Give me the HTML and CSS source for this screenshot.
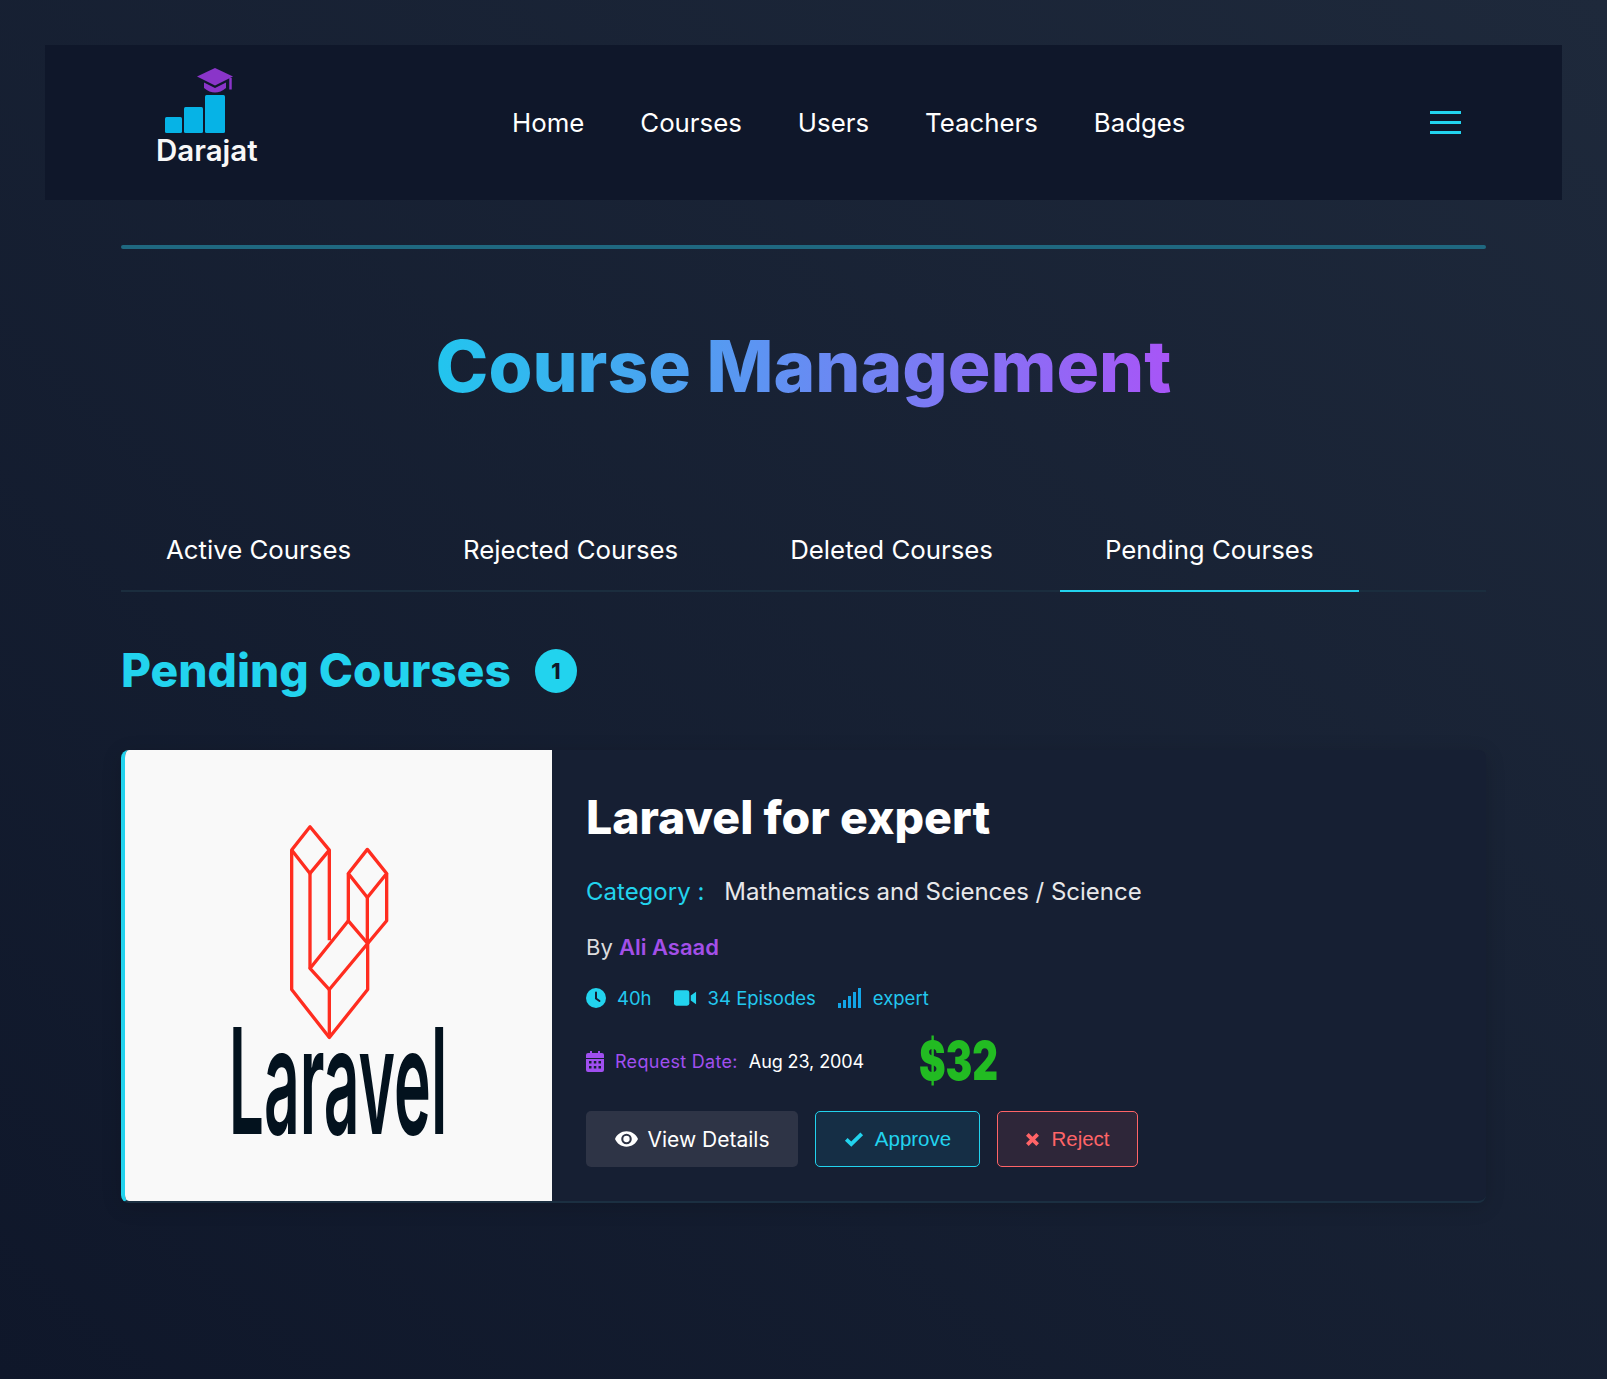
FILE: index.html
```html
<!DOCTYPE html>
<html lang="en">
<head>
<meta charset="utf-8">
<title>Course Management</title>
<link rel="stylesheet" href="styles.css">
</head>
<body>
<header class="nav">
  <a class="logo" href="#">
    <svg class="logo-mark" viewBox="0 0 103 68" width="103" height="68">
      <rect x="9" y="49" width="17" height="16" rx="1.5" fill="#06b3e6"/>
      <rect x="28" y="39" width="19" height="26" rx="1.5" fill="#06b3e6"/>
      <rect x="49" y="27" width="20" height="38" rx="1.5" fill="#06b3e6"/>
      <path d="M59 0 L77 8.5 L59 17.500 L41 8.500Z" fill="#8a35c9"/>
      <path d="M48 14.500 L59 20 L70 14.500 V20 Q59 29 48 20Z" fill="#8a35c9"/>
      <path d="M74.500 10 V21.500" stroke="#8a35c9" stroke-width="2.500" fill="none"/>
    </svg>
    <span class="logo-text">Darajat</span>
  </a>
  <nav class="nav-links">
    <a href="#">Home</a>
    <a href="#">Courses</a>
    <a href="#">Users</a>
    <a href="#">Teachers</a>
    <a href="#">Badges</a>
  </nav>
  <button class="burger" aria-label="Menu"><span></span><span></span><span></span></button>
</header>

<main class="page">
  <div class="rule"></div>
  <h1 class="title">Course Management</h1>

  <div class="tabs">
    <a class="tab" href="#">Active Courses</a>
    <a class="tab" href="#">Rejected Courses</a>
    <a class="tab" href="#">Deleted Courses</a>
    <a class="tab active" href="#">Pending Courses</a>
  </div>

  <div class="section-head">
    <h2>Pending Courses</h2>
    <span class="count">1</span>
  </div>

  <article class="card">
    <div class="thumb">
      <svg viewBox="45 30 1281 1352" width="427" height="451" preserveAspectRatio="none">
        <g fill="none" stroke="#ff2d20" stroke-width="10" stroke-linejoin="round">
          <path d="M600 260 L545 330 L600 400 L658 330Z"/>
          <path d="M545 330 V748 L658 892 L773 748 V610"/>
          <path d="M600 400 V685 M658 330 V600"/>
          <path d="M600 685 L658 748 L773 610 L715 542Z"/>
          <path d="M658 748 V892"/>
          <path d="M772 328 L715 400 L772 472 L830 400Z"/>
          <path d="M715 400 V542 M830 400 V542 L773 610 M772 472 V610"/>
        </g>
        <text class="thumb-word" transform="translate(356 1182) scale(.425 1)">Laravel</text>
      </svg>
    </div>
    <div class="info">
      <h3 class="course-name">Laravel for expert</h3>
      <p class="category"><span class="cat-label">Category :</span><span class="cat-value">Mathematics and Sciences / Science</span></p>
      <p class="author">By <a href="#">Ali Asaad</a></p>
      <ul class="meta">
        <li>
          <svg class="ic" viewBox="0 0 20 20" width="20" height="20"><circle cx="10" cy="10" r="10" fill="#22d3ee"/><path d="M10 4.500 V10.500 L13.500 13" stroke="#161e33" stroke-width="2" fill="none" stroke-linecap="round"/></svg>
          <span>40h</span>
        </li>
        <li>
          <svg class="ic" viewBox="0 0 24 16" width="23" height="16"><rect x="0" y="0" width="16" height="16" rx="2.500" fill="#22d3ee"/><path d="M17.500 5.500 L23 1.500 V14.500 L17.500 10.500Z" fill="#22d3ee"/></svg>
          <span>34 Episodes</span>
        </li>
        <li>
          <svg class="ic" viewBox="0 0 24 20" width="24" height="20" fill="#12a5e8"><rect x="0" y="15" width="3" height="5"/><rect x="5" y="12" width="3" height="8"/><rect x="10" y="8" width="3" height="12"/><rect x="15" y="4" width="3" height="16"/><rect x="20" y="0" width="3" height="20"/></svg>
          <span>expert</span>
        </li>
      </ul>
      <div class="date-row">
        <svg class="ic" viewBox="0 0 18 21" width="18" height="21"><path fill="#a04ff0" fill-rule="evenodd" d="M4 0h2v2h6V0h2v2h2a2 2 0 0 1 2 2v3H0V4a2 2 0 0 1 2-2h2zM0 8h18v11a2 2 0 0 1-2 2H2a2 2 0 0 1-2-2zM3 10v2.500h2.500V10zM7.800 10v2.500h2.500V10zM12.500 10v2.500H15V10zM3 15v2.500h2.500V15zM7.800 15v2.500h2.500V15zM12.500 15v2.500H15V15z"/></svg>
        <span class="date-label">Request Date:</span>
        <span class="date-value">Aug 23, 2004</span>
        <span class="price">$32</span>
      </div>
      <div class="actions">
        <a class="btn btn-view" href="#">
          <svg viewBox="0 0 24 16" width="23" height="16"><path fill="#fff" fill-rule="evenodd" d="M12 0C6.500 0 2 3.300 0 8c2 4.700 6.500 8 12 8s10-3.300 12-8c-2-4.700-6.500-8-12-8zm0 13.500A5.500 5.500 0 1 1 12 2.500a5.500 5.500 0 0 1 0 11z"/><circle cx="12" cy="8" r="3.300" fill="#fff"/></svg>
          <span>View Details</span>
        </a>
        <button class="btn btn-approve">
          <svg viewBox="0 0 22 17" width="20" height="16"><path d="M2.500 9 L8 14.200 L19.500 2.800" fill="none" stroke="#22d3ee" stroke-width="4.200"/></svg>
          <span>Approve</span>
        </button>
        <button class="btn btn-reject">
          <svg viewBox="0 0 16 16" width="15" height="15"><path d="M2.500 2.500 L13.500 13.500 M13.500 2.500 L2.500 13.500" fill="none" stroke="#ff6467" stroke-width="4"/></svg>
          <span>Reject</span>
        </button>
      </div>
    </div>
  </article>
</main>
</body>
</html>
```

FILE: styles.css
```css
* { box-sizing: border-box; }
html, body { margin: 0; }
body {
  min-height: 1379px;
  padding: 45px;
  background: linear-gradient(to bottom left, #1e293b, #0f172a);
  color: #fff;
  font-family: Inter, "Noto Sans", sans-serif;
}
a { color: inherit; text-decoration: none; }
p, h1, h2, h3, ul { margin: 0; padding: 0; }
ul { list-style: none; }

.nav {
  display: flex;
  align-items: center;
  height: 155px;
  padding: 0 101px 0 111px;
  background: #0f172a;
}
.logo { display: flex; flex-direction: column; width: 103px; margin-top: -14px; }
.logo-mark { display: block; }
.logo-text { font-size: 29.5px; line-height: 28px; font-weight: 600; color: #f8f8f8; white-space: nowrap; }
.nav-links { display: flex; gap: 56px; margin-left: 253px; font-size: 25.8px; line-height: 36px; }
.burger { margin-left: auto; display: flex; flex-direction: column; gap: 7px; width: 31px; padding: 0; border: 0; background: none; }
.burger span { display: block; height: 3px; width: 31px; background: #22d3ee; }

.page { width: 1365px; margin: 0 auto; }
.rule { height: 4px; margin-top: 45px; border-radius: 2px; background: #1f6880; }
.title {
  width: fit-content;
  margin: 67px auto 102px;
  font-size: 71.1px;
  line-height: 100px;
  font-weight: 800;
  background: linear-gradient(90deg, #22c5ee 0%, #a855f7 100%);
  -webkit-background-clip: text;
  background-clip: text;
  color: transparent;
}
.tabs { display: flex; gap: 22px; border-bottom: 2px solid #1b2d3e; }
.tab { margin-bottom: -2px; padding: 14px 45px 22px; font-size: 25.8px; line-height: 36px; border-bottom: 2px solid transparent; white-space: nowrap; }
.tab.active { border-bottom-color: #22d3ee; }

.section-head { display: flex; align-items: center; gap: 24px; margin-top: 48px; }
.section-head h2 { font-size: 46.1px; line-height: 60px; font-weight: 800; color: #22d3ee; }
.count { display: flex; align-items: center; justify-content: center; width: 42px; height: 44px; margin-top: 2px; border-radius: 50%; background: #22d3ee; color: #0f172a; font-size: 21px; font-weight: 800; }

.card {
  display: flex;
  height: 453px;
  margin-top: 50px;
  border-left: 4px solid #22d3ee;
  border-bottom: 2px solid #1b2f41;
  border-radius: 8px;
  overflow: hidden;
  background: #161f33;
  box-shadow: 0 4px 20px rgba(0, 0, 0, .15);
}
.thumb { flex: 0 0 427px; height: 451px; background: #f9f9f9; }
.thumb svg { display: block; }
.thumb-word { font-family: Inter, sans-serif; font-size: 440px; font-weight: 600; fill: #03121e; }
.info { padding: 37px 0 0 34px; flex: 1; }
.course-name { font-size: 46.4px; line-height: 60px; font-weight: 800; }
.category { margin-top: 27px; font-size: 24px; line-height: 36px; }
.cat-label { color: #22d3ee; }
.cat-value { margin-left: 20px; color: #e8e8ea; letter-spacing: -.02px; }
.author { margin-top: 21px; font-size: 22px; line-height: 32px; color: #dcdcde; }
.author a { color: #a34fe8; font-weight: 600; }
.meta { display: flex; gap: 22px; margin-top: 21px; font-size: 18.5px; line-height: 28px; color: #22c7ee; }
.meta li { display: flex; align-items: center; gap: 11px; }
.ic { display: block; flex: none; }
.date-row { display: flex; align-items: center; height: 60px; margin-top: 19px; font-size: 18px; }
.date-label { margin-left: 11px; color: #a04ff0; letter-spacing: .3px; }
.date-value { margin-left: 11px; letter-spacing: -.1px; }
.price {
  margin-left: 55px;
  font-size: 54px;
  line-height: 60px;
  font-weight: 900;
  color: #22bb22;
  transform: scaleX(.74);
  transform-origin: 0 50%;
}
.actions { display: flex; gap: 17px; margin-top: 20px; }
.btn { display: flex; align-items: center; justify-content: center; height: 56px; border-radius: 5px; font-size: 21px; }
.btn-view { width: 212px; gap: 10px; background: #2e3446; }
.btn-approve, .btn-reject { font-family: "Liberation Sans", Arial, sans-serif; gap: 11px; font-size: 20.5px; padding-bottom: 1px; }
.btn-approve { width: 165px; border: 1px solid #22d3ee; background: #152e45; color: #22d3ee; }
.btn-reject { width: 141px; border: 1px solid #ff6467; background: #2e2639; color: #ff6467; }
```
